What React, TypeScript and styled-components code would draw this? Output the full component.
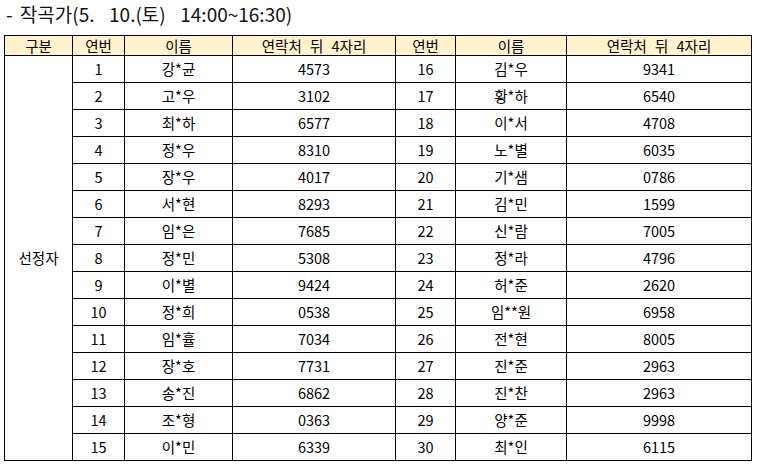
import React from 'react';
import styled, { createGlobalStyle } from 'styled-components';

const GlobalStyle = createGlobalStyle`
  html, body {
    margin: 0;
    padding: 0;
    background: #ffffff;
  }
  body {
    font-family: "Noto Sans CJK KR", "Noto Sans", sans-serif;
    color: #000;
  }
`;

const Page = styled.div`
  width: 758px;
  height: 468px;
  padding: 0 0 0 4px;
  box-sizing: border-box;
  overflow: hidden;
`;

const Title = styled.div`
  height: 35px;
  padding-left: 2px;
  font-size: 19px;
  line-height: 28px;
  color: #111;
  word-spacing: 3px;
  white-space: pre;
`;

const Table = styled.table`
  border-collapse: collapse;
  table-layout: fixed;
  width: 748px;
  font-size: 14.5px;
  font-weight: 400;
`;

const HeadCell = styled.th`
  height: 19px;
  padding: 0;
  background: #fff2cc;
  border: 1px solid #000;
  font-weight: 400;
  line-height: 18px;
  text-align: center;
  word-spacing: 5px;
`;

const Cell = styled.td`
  height: 26px;
  padding: 0;
  border: 1px solid #000;
  line-height: 20px;
  text-align: center;
  vertical-align: middle;
`;

const cols = [68, 52, 108, 163, 60, 111, 185];

const rows: [number, string, string, number, string, string][] = [
  [1, '강*균', '4573', 16, '김*우', '9341'],
  [2, '고*우', '3102', 17, '황*하', '6540'],
  [3, '최*하', '6577', 18, '이*서', '4708'],
  [4, '정*우', '8310', 19, '노*별', '6035'],
  [5, '장*우', '4017', 20, '기*샘', '0786'],
  [6, '서*현', '8293', 21, '김*민', '1599'],
  [7, '임*은', '7685', 22, '신*람', '7005'],
  [8, '정*민', '5308', 23, '정*라', '4796'],
  [9, '이*별', '9424', 24, '허*준', '2620'],
  [10, '정*희', '0538', 25, '임**원', '6958'],
  [11, '임*휼', '7034', 26, '전*현', '8005'],
  [12, '장*호', '7731', 27, '진*준', '2963'],
  [13, '송*진', '6862', 28, '진*찬', '2963'],
  [14, '조*형', '0363', 29, '양*준', '9998'],
  [15, '이*민', '6339', 30, '최*인', '6115'],
];

export default function App() {
  return (
    <Page>
      <GlobalStyle />
      <Title>{'- 작곡가(5.  10.(토)  14:00~16:30)'}</Title>
      <Table>
        <colgroup>
          {cols.map((w, i) => (
            <col key={i} style={{ width: w }} />
          ))}
        </colgroup>
        <thead>
          <tr>
            <HeadCell>구분</HeadCell>
            <HeadCell>연번</HeadCell>
            <HeadCell>이름</HeadCell>
            <HeadCell>연락처 뒤 4자리</HeadCell>
            <HeadCell>연번</HeadCell>
            <HeadCell>이름</HeadCell>
            <HeadCell>연락처 뒤 4자리</HeadCell>
          </tr>
        </thead>
        <tbody>
          {rows.map((r, i) => (
            <tr key={r[0]}>
              {i === 0 && <Cell rowSpan={15}>선정자</Cell>}
              <Cell>{r[0]}</Cell>
              <Cell>{r[1]}</Cell>
              <Cell>{r[2]}</Cell>
              <Cell>{r[3]}</Cell>
              <Cell>{r[4]}</Cell>
              <Cell>{r[5]}</Cell>
            </tr>
          ))}
        </tbody>
      </Table>
    </Page>
  );
}
